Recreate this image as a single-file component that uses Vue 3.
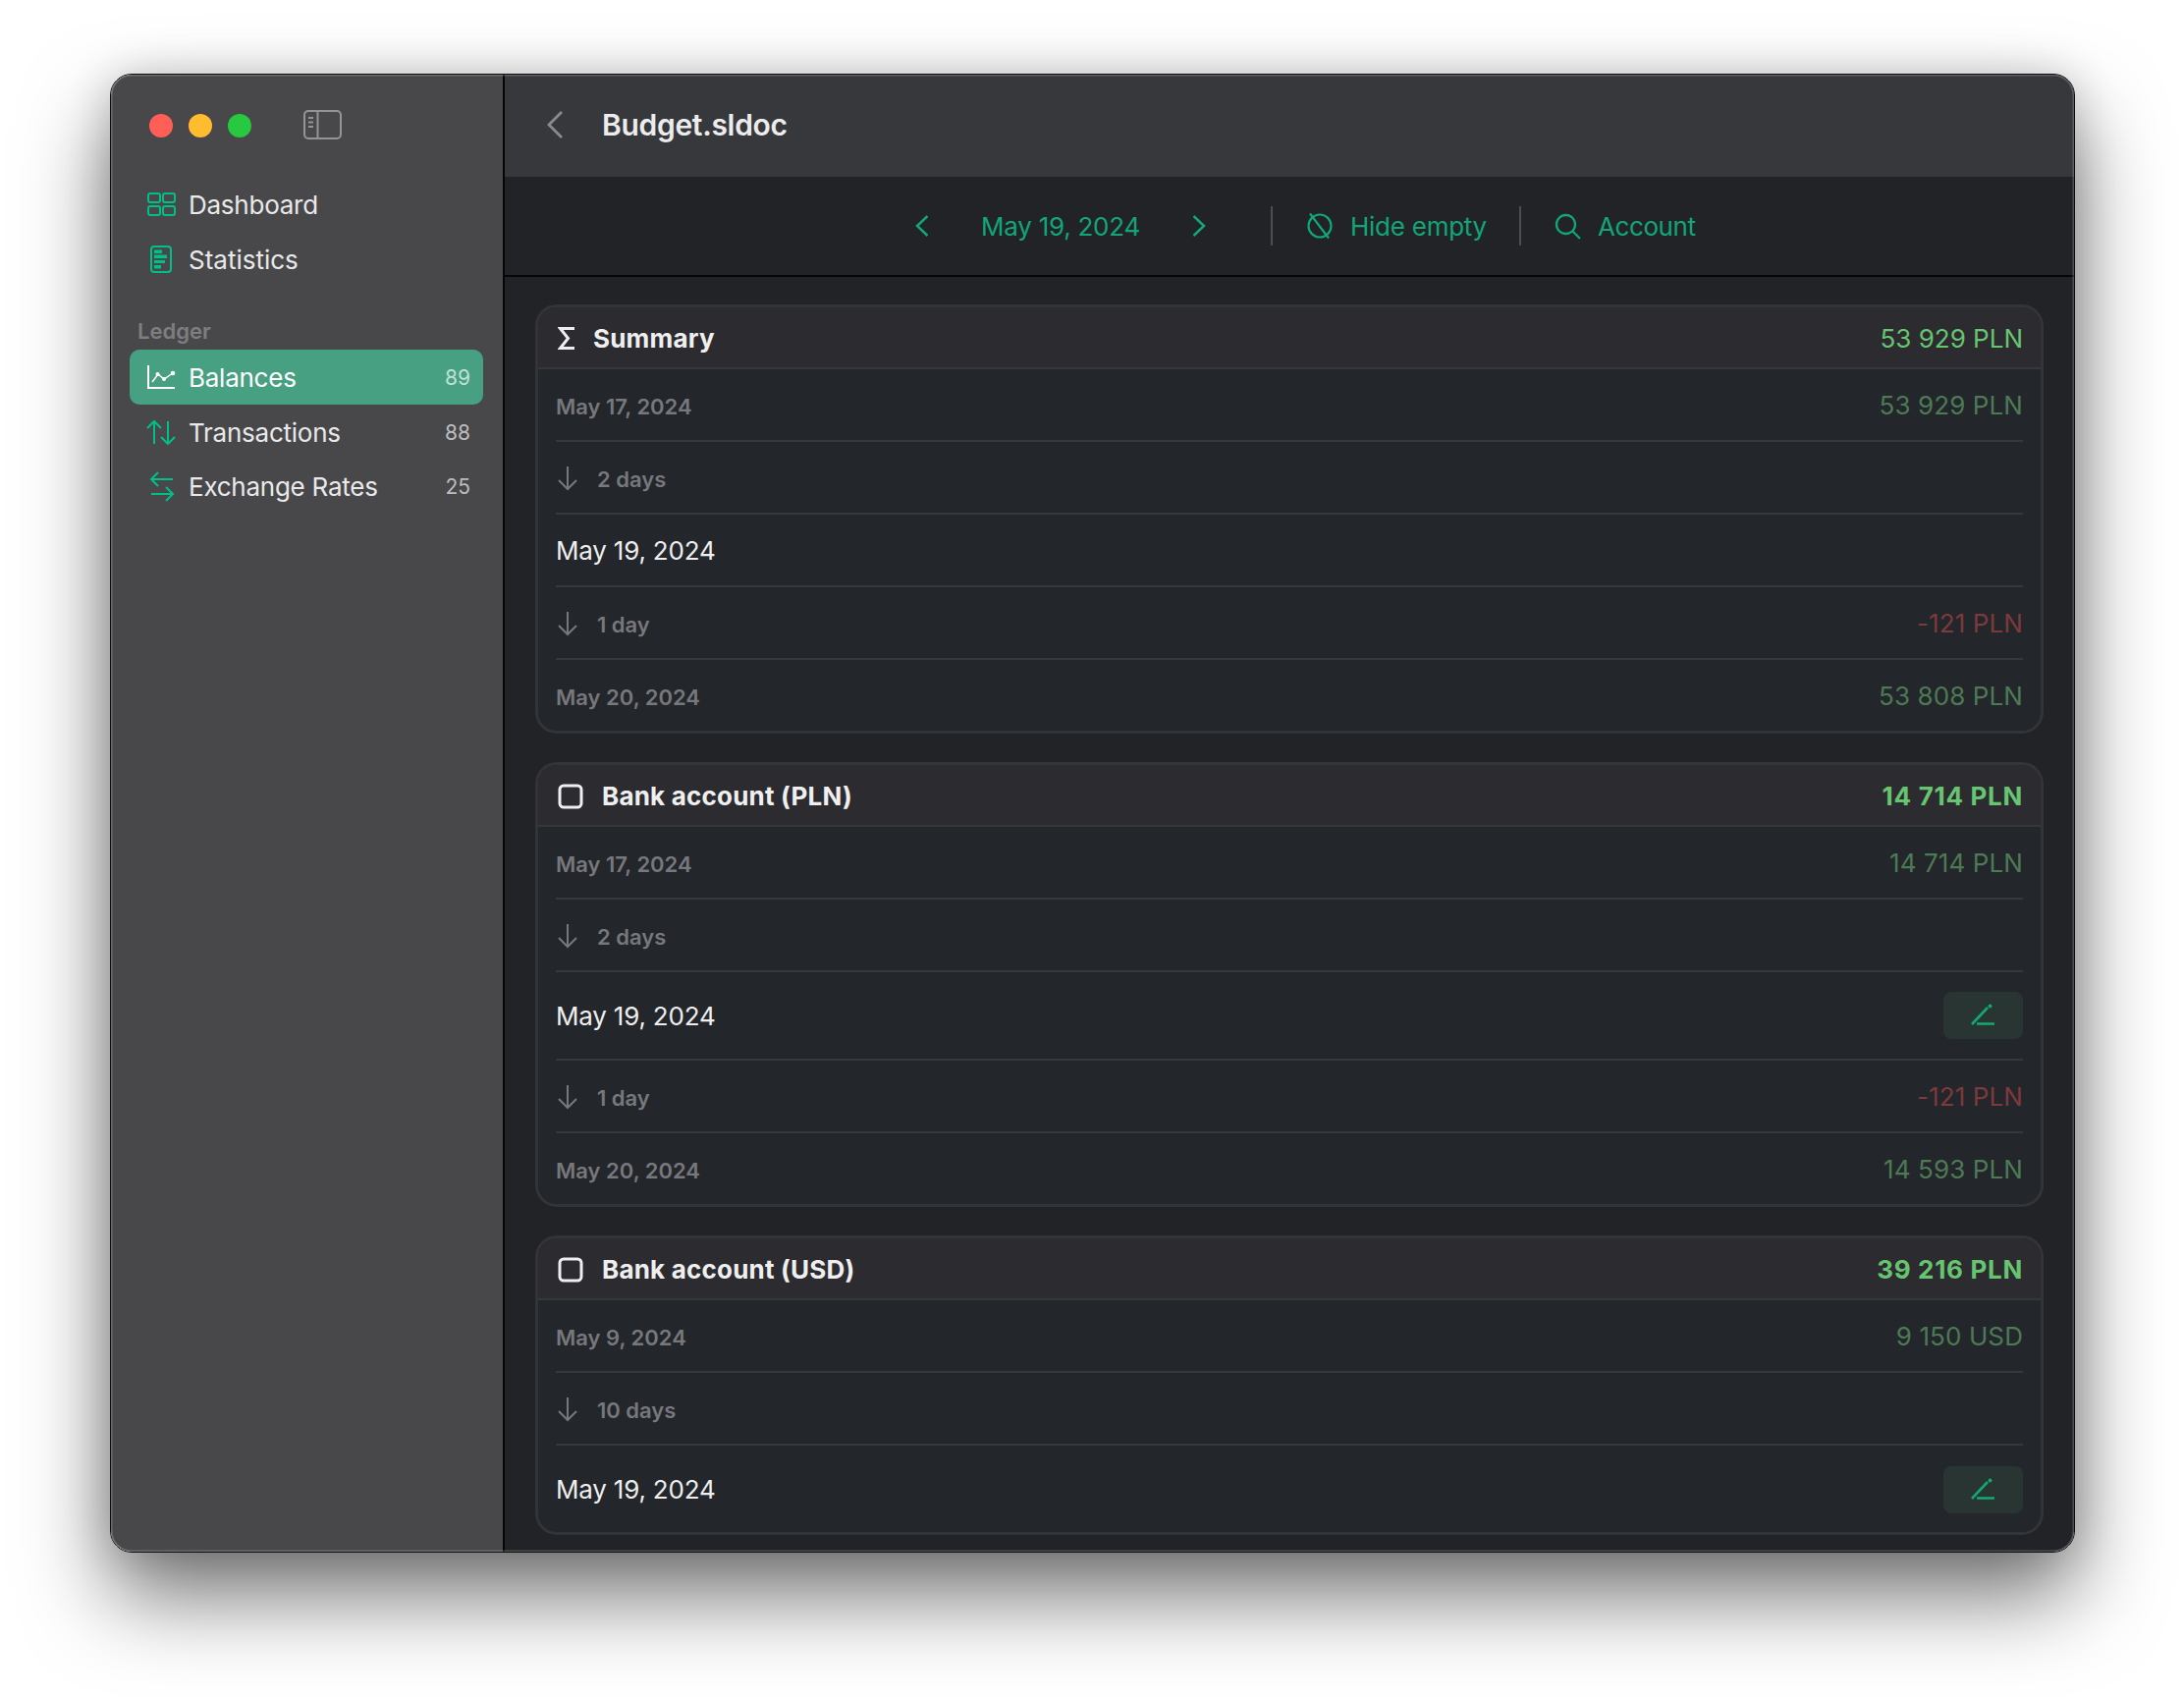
<script setup>
const cards = [
  { title: 'Summary', total: '53 929 PLN', sum: true, rows: [
    { k: 'date', label: 'May 17, 2024', amount: '53 929 PLN' },
    { k: 'gap', label: '2 days' },
    { k: 'now', label: 'May 19, 2024' },
    { k: 'gap', label: '1 day', neg: '-121 PLN' },
    { k: 'date', label: 'May 20, 2024', amount: '53 808 PLN' },
  ] },
  { title: 'Bank account (PLN)', total: '14 714 PLN', rows: [
    { k: 'date', label: 'May 17, 2024', amount: '14 714 PLN' },
    { k: 'gap', label: '2 days' },
    { k: 'now', label: 'May 19, 2024', edit: true },
    { k: 'gap', label: '1 day', neg: '-121 PLN' },
    { k: 'date', label: 'May 20, 2024', amount: '14 593 PLN' },
  ] },
  { title: 'Bank account (USD)', total: '39 216 PLN', rows: [
    { k: 'date', label: 'May 9, 2024', amount: '9 150 USD' },
    { k: 'gap', label: '10 days' },
    { k: 'now', label: 'May 19, 2024', edit: true },
  ] },
]
</script>

<template>
  <div class="page">
    <div class="window">
      <aside class="sidebar">
        <div class="traffic">
          <span class="dot red"></span><span class="dot yellow"></span><span class="dot green"></span>
          <svg class="toggle" width="40" height="30" viewBox="0 0 40 30" fill="none" stroke="#949496" stroke-width="2">
            <rect x="1" y="1" width="37" height="28" rx="4" />
            <path d="M14.500 1v28" />
            <path d="M5 8h5M5 12.500h5M5 17h5" />
          </svg>
        </div>
        <nav class="group">
          <a class="item">
            <span class="slot">
              <svg width="30" height="26" viewBox="0 0 30 26" fill="none" stroke="#00c08a" stroke-width="2">
                <rect x="2" y="2" width="12" height="9" rx="2" /><rect x="17" y="2" width="12" height="9" rx="2" />
                <rect x="2" y="15" width="12" height="9" rx="2" /><rect x="17" y="15" width="12" height="9" rx="2" />
              </svg>
            </span>
            <span class="name">Dashboard</span>
          </a>
          <a class="item">
            <span class="slot">
              <svg width="30" height="28" viewBox="0 0 30 28" fill="none">
                <rect x="5" y="1" width="20" height="26" rx="3" stroke="#00c08a" stroke-width="2" />
                <path d="M8 4.500h8v3.500H8zM8 9.500h13V13H8zM8 15h11v3H8zM8 20h7v3.500H8z" fill="#00c08a" />
              </svg>
            </span>
            <span class="name wide">Statistics</span>
          </a>
        </nav>
        <div class="heading">Ledger</div>
        <nav>
          <a class="item active">
            <span class="slot">
              <svg width="30" height="26" viewBox="0 0 30 26" fill="none" stroke="#fff" stroke-width="2">
                <path d="M2 1v23h27" />
                <path d="M6 18l6-8 6 5 9-6" stroke-width="1.500" />
                <g fill="#fff" stroke="none"><circle cx="11.500" cy="10" r="2" /><circle cx="18" cy="15" r="2" /><circle cx="27" cy="9" r="2.300" /></g>
              </svg>
            </span>
            <span class="name">Balances</span><span class="count">89</span>
          </a>
          <a class="item">
            <span class="slot">
              <svg width="30" height="26" viewBox="0 0 30 26" fill="none" stroke="#00c08a" stroke-width="2">
                <path d="M8 25V2M1 9l7-7 7 7" /><path d="M22 2v23M15 18l7 7 7-7" />
              </svg>
            </span>
            <span class="name">Transactions</span><span class="count">88</span>
          </a>
          <a class="item tight">
            <span class="slot">
              <svg width="30" height="32" viewBox="0 0 30 32" fill="none" stroke="#00c08a" stroke-width="2">
                <path d="M27 9H5M12 2L5 9l7 7" /><path d="M5 24h22M20 17l7 7-7 7" />
              </svg>
            </span>
            <span class="name">Exchange Rates</span><span class="count">25</span>
          </a>
        </nav>
      </aside>

      <main class="main">
        <header class="titlebar">
          <svg width="18" height="30" viewBox="0 0 18 30" fill="none" stroke="#8a8b8e" stroke-width="2.800">
            <path d="M16 2L3 15l13 13" />
          </svg>
          <h1 class="title">Budget.sldoc</h1>
        </header>

        <div class="toolbar">
          <div class="pager">
            <svg width="14" height="24" viewBox="0 0 14 24" fill="none" stroke="#12a578" stroke-width="2.500"><path d="M12.500 2L2 12l10.500 10" /></svg>
            <span>May 19, 2024</span>
            <svg width="14" height="24" viewBox="0 0 14 24" fill="none" stroke="#12a578" stroke-width="2.500"><path d="M1.500 2L12 12 1.500 22" /></svg>
          </div>
          <i class="vr first"></i>
          <div class="tool">
            <svg width="28" height="28" viewBox="0 0 28 28" fill="none" stroke="#12a578" stroke-width="2.200">
              <circle cx="14" cy="14" r="11.500" /><path d="M4 1.500L23 26.500" />
            </svg>
            <span>Hide empty</span>
          </div>
          <i class="vr"></i>
          <div class="tool search">
            <svg width="27" height="27" viewBox="0 0 27 27" fill="none" stroke="#12a578" stroke-width="2.300">
              <circle cx="11.500" cy="11.500" r="9.500" /><path d="M18.500 18.500L26 26" />
            </svg>
            <span>Account</span>
          </div>
        </div>

        <div class="content">
          <section v-for="c in cards" :key="c.title" class="card">
            <div class="card-head">
              <svg v-if="c.sum" class="sigma" width="18" height="25" viewBox="0 0 18 25" fill="none" stroke="#eeeeef" stroke-width="3">
                <path d="M17 2.500H2.500L10.500 12.500 2.500 22.500H17" />
              </svg>
              <svg v-else class="box" width="26" height="26" viewBox="0 0 26 26" fill="none" stroke="#eeeeef" stroke-width="3">
                <rect x="2" y="2" width="22" height="22" rx="4" />
              </svg>
              <span class="head-title">{{ c.title }}</span>
              <span class="total" :class="{ heavy: !c.sum }">{{ c.total }}</span>
            </div>
            <div class="rows">
              <div v-for="(r, i) in c.rows" :key="i" class="row" :class="[r.k, { tall: r.edit }]">
                <template v-if="r.k === 'gap'">
                  <svg class="arrow" width="22" height="26" viewBox="0 0 22 26" fill="none" stroke="#77787c" stroke-width="2">
                    <path d="M11 1v23M2 15l9 9 9-9" />
                  </svg>
                </template>
                <span class="label">{{ r.label }}</span>
                <span v-if="r.amount" class="amount">{{ r.amount }}</span>
                <span v-if="r.neg" class="amount negative">{{ r.neg }}</span>
                <button v-if="r.edit" class="edit">
                  <svg width="30" height="24" viewBox="0 0 30 24" fill="none" stroke="#12a86f" stroke-width="2.600">
                    <path d="M3 21L19 4" /><path d="M8 20.500h18" />
                    <circle cx="21.500" cy="2.500" r="2" fill="#12a86f" stroke="none" />
                  </svg>
                </button>
              </div>
            </div>
          </section>
        </div>
      </main>
    </div>
  </div>
</template>

<style>
html, body { margin: 0; background: #fff; }
</style>

<style scoped>
.page {
  width: 2224px;
  height: 1728px;
  padding: 75px 0 0 112px;
  box-sizing: border-box;
  overflow: hidden;
  font-family: Inter, "Liberation Sans", sans-serif;
  letter-spacing: -0.25px;
  background: #fff;
}
.window {
  position: relative;
  width: 2001px;
  height: 1506px;
  box-sizing: border-box;
  display: flex;
  border-radius: 22px;
  border: 1px solid #0c0c0c;
  overflow: hidden;
  box-shadow: 0 44px 88px rgba(0, 0, 0, 0.55), 0 0 44px rgba(0, 0, 0, 0.16);
}
.window::after {
  content: '';
  position: absolute;
  inset: 0;
  border-radius: 21px;
  box-shadow: inset 0 0 0 1.500px rgba(255, 255, 255, 0.2);
  pointer-events: none;
}
.sidebar {
  width: 401px;
  flex: none;
  box-sizing: border-box;
  background: #48484a;
  border-right: 2px solid #050505;
  padding: 39px 19px 0 19px;
}
.traffic { display: flex; align-items: center; height: 24px; padding-left: 20px; gap: 16px; }
.dot { width: 24px; height: 24px; border-radius: 50%; margin-top: 2px; }
.red { background: #ff5f57; }
.yellow { background: #febc2e; }
.green { background: #28c840; }
.toggle { margin-left: 37px; }
.group { margin-top: 41px; }
.heading {
  margin-top: 30px;
  height: 34px;
  line-height: 30px;
  padding-left: 8px;
  font-size: 22px;
  font-weight: 600;
  letter-spacing: 0;
  color: #7e7e80;
}
.item {
  height: 56px;
  display: flex;
  align-items: center;
  padding: 0 13px 0 17px;
  border-radius: 10px;
  color: #e9e9ea;
  font-size: 26px;
  margin-right: 1px;
}
.item.tight { height: 54px; }
.item.active { background: #48a083; color: #fff; }
.slot { width: 30px; margin-right: 13px; display: flex; align-items: center; justify-content: center; flex: none; }
.name { flex: 1; }
.name.wide { letter-spacing: 0; }
.count { font-size: 21px; letter-spacing: 0; color: #bcbcbd; }
.active .count { color: #bfe0d4; }

.main { flex: 1; min-width: 0; display: flex; flex-direction: column; background: #222327; }
.titlebar {
  height: 104px;
  flex: none;
  box-sizing: border-box;
  padding: 0 0 2px 42px;
  display: flex;
  align-items: center;
  background: #37383c;
}
.title { margin: 0 0 0 39px; font-size: 30px; font-weight: 600; letter-spacing: -0.3px; color: #ececed; }
.toolbar {
  height: 102px;
  flex: none;
  box-sizing: border-box;
  border-bottom: 2px solid #060606;
  display: flex;
  align-items: center;
  padding-left: 418px;
  color: #12a578;
  font-size: 26px;
}
.pager { display: flex; align-items: center; gap: 53px; }
.vr { width: 2px; height: 40px; background: #4c4d50; margin: 0 34px 0 33px; }
.vr.first { margin: 0 34px 0 66px; }
.tool { display: flex; align-items: center; gap: 17px; }
.tool.search { gap: 17px; letter-spacing: -0.4px; }
.content {
  flex: 1;
  min-height: 0;
  overflow: hidden;
  padding: 28px 31px 0;
  display: flex;
  flex-direction: column;
  gap: 29px;
}
.card {
  flex: none;
  border: 3px solid #323439;
  border-radius: 22px;
  background: #23262a;
  overflow: hidden;
}
.card-head {
  height: 63px;
  box-sizing: border-box;
  display: flex;
  align-items: center;
  padding: 2px 18px 0 18px;
  background: #2c2b2f;
  border-bottom: 2px solid #36373b;
}
.sigma { margin: 0 18px 0 2px; }
.box { margin: 0 19px 0 2px; }
.head-title { flex: 1; font-size: 26px; font-weight: 700; letter-spacing: 0.2px; color: #efeff0; }
.total { font-size: 26px; letter-spacing: 0; color: #67c470; }
.total.heavy { font-weight: 700; letter-spacing: 0.7px; }
.rows { padding: 0 18px; }
.row {
  height: 74px;
  box-sizing: border-box;
  display: flex;
  align-items: center;
  justify-content: space-between;
  border-bottom: 2px solid #36383c;
}
.row:last-child { border-bottom: 0; margin-bottom: -2px; padding-bottom: 1px; }
.row.tall { height: 90px; }
.row .label { padding-top: 3px; color: #77787c; font-size: 22px; font-weight: 600; letter-spacing: 0; }
.row.gap { justify-content: flex-start; }
.row.now .label { padding-top: 0; color: #eeeeef; font-size: 26px; font-weight: 400; letter-spacing: -0.2px; }
.arrow { margin: 1px 19px 0 1px; }
.amount { font-size: 26px; letter-spacing: 0.1px; color: #4d7a56; }
.gap .amount { margin-left: auto; }
.negative { color: #7d3a3c; }
.edit {
  width: 81px;
  height: 48px;
  border: 0;
  padding: 0;
  border-radius: 8px;
  background: #283533;
  display: flex;
  align-items: center;
  justify-content: center;
}
</style>
